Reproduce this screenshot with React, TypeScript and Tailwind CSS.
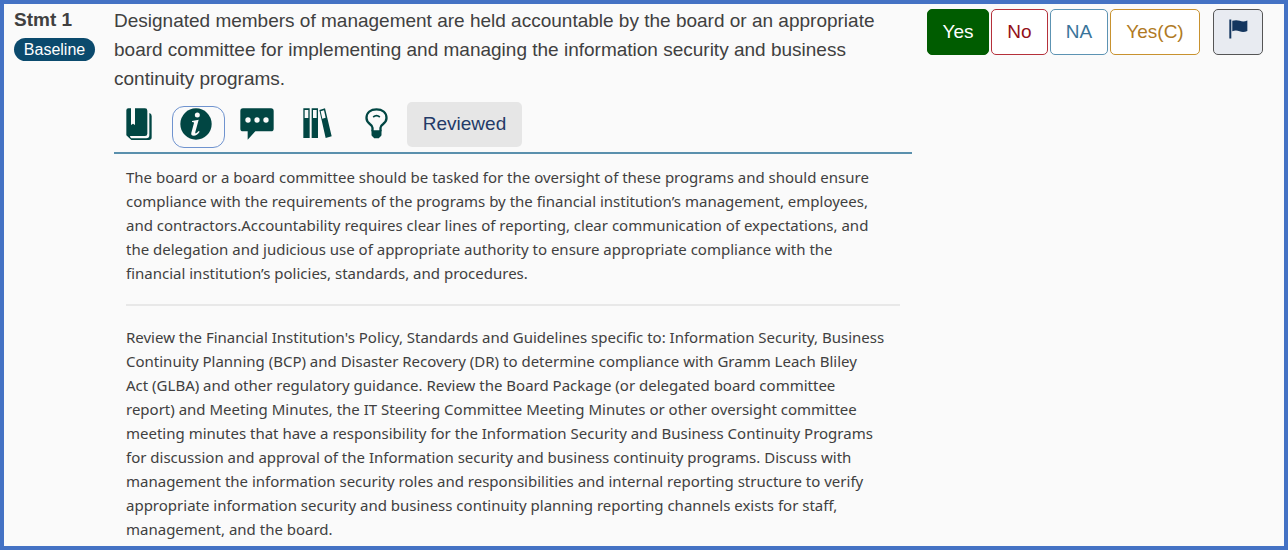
import type { ReactNode } from "react";

const ANSWERS = [
  { label: "Yes", style: "w-[62px] border-[#005c00] bg-[#005c00] text-white" },
  { label: "No", style: "w-[57px] border-[#b5303a] bg-white text-[#931018]" },
  { label: "NA", style: "w-[58px] border-[#5c93b3] bg-white text-[#39749a]" },
  { label: "Yes(C)", style: "w-[90px] border-[#c8922f] bg-white text-[#b07a24]" },
];

const GUIDANCE = [
  "The board or a board committee should be tasked for the oversight of these programs and should ensure",
  "compliance with the requirements of the programs by the financial institution’s management, employees,",
  "and contractors.Accountability requires clear lines of reporting, clear communication of expectations, and",
  "the delegation and judicious use of appropriate authority to ensure appropriate compliance with the",
  "financial institution’s policies, standards, and procedures.",
];

const PROCEDURE = [
  "Review the Financial Institution's Policy, Standards and Guidelines specific to: Information Security, Business",
  "Continuity Planning (BCP) and Disaster Recovery (DR) to determine compliance with Gramm Leach Bliley",
  "Act (GLBA) and other regulatory guidance. Review the Board Package (or delegated board committee",
  "report) and Meeting Minutes, the IT Steering Committee Meeting Minutes or other oversight committee",
  "meeting minutes that have a responsibility for the Information Security and Business Continuity Programs",
  "for discussion and approval of the Information security and business continuity programs. Discuss with",
  "management the information security roles and responsibilities and internal reporting structure to verify",
  "appropriate information security and business continuity planning reporting channels exists for staff,",
  "management, and the board.",
];

function BookIcon() {
  return (
    <svg viewBox="47 54 78 96" className="h-8 w-[26px]" fill="#014643" aria-hidden="true">
      <path d="M54 55H62V105L68 101L74 105V55H104Q111 55 111 62V131Q111 138 104 138H60Q57 139 63 145H108Q117 145 117 136V69Q124 71 124 78V142Q124 150 116 150H63L48 136V61Q48 55 54 55Z" />
    </svg>
  );
}

function InfoIcon() {
  return (
    <svg viewBox="0 0 96 96" className="size-8" aria-hidden="true">
      <circle cx="48" cy="48" r="47" fill="#014643" />
      <circle cx="52" cy="21" r="7.5" fill="#fafafa" />
      <path
        d="M36 39L56 35L46 72Q45 77 48 76Q51 75 56 69L59 71Q51 83 41 83Q32 83 34 74L42 45Q43 42 36 42Z"
        fill="#fafafa"
      />
    </svg>
  );
}

function CommentIcon() {
  return (
    <svg viewBox="389 54 102 96" className="h-8 w-[34px]" aria-hidden="true">
      <path
        d="M398 55H482Q490 55 490 63V116Q490 124 482 124H435L412 149V124H398Q390 124 390 116V63Q390 55 398 55Z"
        fill="#014643"
      />
      <circle cx="413" cy="90" r="8" fill="#fafafa" />
      <circle cx="440" cy="90" r="8" fill="#fafafa" />
      <circle cx="467" cy="90" r="8" fill="#fafafa" />
    </svg>
  );
}

function BindersIcon() {
  return (
    <svg viewBox="8 54 87 96" className="h-8 w-[29px]" aria-hidden="true">
      <path d="M9 55H28V144H9ZM34 55H53V144H34ZM57 60L74 55L94 139L76 144Z" fill="#014643" />
      <path d="M13 60H24V84H13ZM38 60H49V84H38ZM61 64L71 61L76 83L66 86Z" fill="#fafafa" />
    </svg>
  );
}

function BulbIcon() {
  return (
    <svg viewBox="191 54 68 96" className="h-8 w-[23px]" aria-hidden="true">
      <path
        d="M213 124V113Q213 108 205 102Q195 94 195 84C195 67 208 58 225 58C242 58 255 67 255 84Q255 94 245 102Q237 108 237 113V124"
        fill="none"
        stroke="#014643"
        strokeWidth="7"
      />
      <path d="M215 81Q225 73 235 81" fill="none" stroke="#014643" strokeWidth="5" />
      <path d="M210 121H240V134Q240 139 236 140L232 145H218L214 140Q210 139 210 134Z" fill="#014643" />
    </svg>
  );
}

function FlagIcon() {
  return (
    <svg viewBox="956 56 58 60" className="h-5 w-[19px]" fill="#14365f" aria-hidden="true">
      <path d="M957 57H963V115H957ZM966 61Q978 57 989 61Q1000 66 1012 60V92Q1000 98 988 93Q977 88 966 93Z" />
    </svg>
  );
}

function ToolButton({ label, className, children }: { label: string; className: string; children: ReactNode }) {
  return (
    <button type="button" aria-label={label} className={`flex items-start ${className}`}>
      {children}
    </button>
  );
}

function Lines({ lines }: { lines: string[] }) {
  return (
    <p>
      {lines.map((line) => (
        <span key={line} className="block">
          {line}{" "}
        </span>
      ))}
    </p>
  );
}

export default function App() {
  return (
    <main className="min-h-screen border-4 border-[#4472c4] bg-[#fafafa] font-['Liberation_Sans',Arial,sans-serif] text-[#404040]">
      <div className="grid grid-cols-[100px_minmax(0,798px)_auto] pl-[10px]">
        <header className="flex flex-col items-start pt-1">
          <h1 className="text-[19px] leading-6 font-bold">Stmt 1</h1>
          <span className="mt-[6px] flex h-[23px] w-[81px] items-center justify-center rounded-full bg-[#0b4a6d] text-base leading-none text-white">
            Baseline
          </span>
        </header>

        <section>
          <p className="pt-[2px] text-[19px] leading-[29px]">
            Designated members of management are held accountable by the board or an appropriate board committee for
            implementing and managing the information security and business continuity programs.
          </p>

          <div className="mt-[9px] flex gap-[6px] border-b-2 border-[#5a90ad] pb-1">
            <ToolButton label="Reference" className="mt-1 h-[41px] w-[50px] justify-center pt-[2px]">
              <BookIcon />
            </ToolButton>
            <ToolButton label="Guidance" className="mt-1 ml-[2px] h-[42px] w-[53px] rounded-xl border border-[#6f93cf] pt-px pl-[7px]">
              <InfoIcon />
            </ToolButton>
            <ToolButton label="Comments" className="mt-1 h-[41px] w-[52px] justify-center pt-[2px]">
              <CommentIcon />
            </ToolButton>
            <ToolButton label="Library" className="mt-1 h-[41px] w-[56px] justify-center pt-[2px]">
              <BindersIcon />
            </ToolButton>
            <ToolButton label="Tips" className="mt-1 h-[41px] w-[50px] justify-center pt-[2px]">
              <BulbIcon />
            </ToolButton>
            <button type="button" className="h-[45px] w-[115px] rounded-[5px] bg-[#e6e6e6] text-[19px] text-[#233a68]">
              Reviewed
            </button>
          </div>

          <div className="px-3 pt-[11px] font-['Noto_Sans','Open_Sans',sans-serif] text-[15px] leading-6">
            <Lines lines={GUIDANCE} />
            <hr className="my-[19px] border-t-2 border-[#e8e8e8]" />
            <Lines lines={PROCEDURE} />
          </div>
        </section>

        <aside className="flex items-start pt-[5px] pl-[15px]">
          <div className="flex gap-[2px]">
            {ANSWERS.map((answer) => (
              <button
                key={answer.label}
                type="button"
                className={`h-[46px] rounded-[5px] border text-[19px] ${answer.style}`}
              >
                {answer.label}
              </button>
            ))}
          </div>
          <button
            type="button"
            aria-label="Flag statement"
            className="ml-[13px] flex h-[46px] w-[50px] items-start justify-center rounded-[5px] border border-[#555555] bg-[#e8ebf1] pt-[9px]"
          >
            <FlagIcon />
          </button>
        </aside>
      </div>
    </main>
  );
}
